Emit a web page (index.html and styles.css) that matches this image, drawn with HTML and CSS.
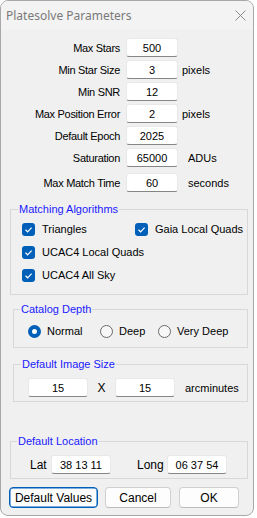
FILE: index.html
```html
<!DOCTYPE html>
<html>

<head>
  <title>Platesolve Parameters</title>
  <link rel="stylesheet" href="styles.css">
</head>

<body>
  <div class="window">
    <div class="titlebar">
      <span class="title">Platesolve Parameters</span>
      <svg class="close" width="11" height="11" viewBox="0 0 11 11">
        <path d="M0.5 0.5 L10.5 10.5 M10.5 0.5 L0.5 10.5" stroke="#8a8a8a" stroke-width="1" fill="none" />
      </svg>
    </div>

    <div class="content">
      <div class="params">
        <label>Max Stars</label>
        <input type="text" value="500">
        <span></span>

        <label>Min Star Size</label>
        <input type="text" value="3">
        <span class="unit">pixels</span>

        <label>Min SNR</label>
        <input type="text" value="12">
        <span></span>

        <label>Max Position Error</label>
        <input type="text" value="2">
        <span class="unit">pixels</span>

        <label>Default Epoch</label>
        <input type="text" value="2025">
        <span></span>

        <label>Saturation</label>
        <input type="text" value="65000">
        <span class="unit wide">ADUs</span>

        <label class="last">Max Match Time</label>
        <input class="last" type="text" value="60">
        <span class="unit wide last">seconds</span>
      </div>

      <fieldset class="group algos">
        <legend>Matching Algorithms</legend>
        <div class="checks">
          <div class="check-item"><span class="checkbox"><svg width="13" height="13" viewBox="0 0 13 13"><path d="M3.5 6.8 L5.6 8.8 L9.6 4.6" stroke="#fff" stroke-width="1.2" fill="none" /></svg></span>Triangles</div>
          <div class="check-item"><span class="checkbox"><svg width="13" height="13" viewBox="0 0 13 13"><path d="M3.5 6.8 L5.6 8.8 L9.6 4.6" stroke="#fff" stroke-width="1.2" fill="none" /></svg></span>Gaia Local Quads</div>
          <div class="check-item"><span class="checkbox"><svg width="13" height="13" viewBox="0 0 13 13"><path d="M3.5 6.8 L5.6 8.8 L9.6 4.6" stroke="#fff" stroke-width="1.2" fill="none" /></svg></span>UCAC4 Local Quads</div>
          <div></div>
          <div class="check-item"><span class="checkbox"><svg width="13" height="13" viewBox="0 0 13 13"><path d="M3.5 6.8 L5.6 8.8 L9.6 4.6" stroke="#fff" stroke-width="1.2" fill="none" /></svg></span>UCAC4 All Sky</div>
        </div>
      </fieldset>

      <fieldset class="group depth">
        <legend>Catalog Depth</legend>
        <div class="radios">
          <div class="radio-item normal"><span class="radio selected"></span>Normal</div>
          <div class="radio-item deep"><span class="radio"></span>Deep</div>
          <div class="radio-item"><span class="radio"></span>Very Deep</div>
        </div>
      </fieldset>

      <fieldset class="group imagesize">
        <legend>Default Image Size</legend>
        <div class="size-row">
          <input class="wide-input" type="text" value="15">
          <span class="times">X</span>
          <input class="wide-input" type="text" value="15">
          <span class="arcmin">arcminutes</span>
        </div>
      </fieldset>

      <fieldset class="group location">
        <legend>Default Location</legend>
        <div class="loc-row">
          <span class="lat">Lat</span>
          <input class="wide-input" type="text" value="38 13 11">
          <span class="long">Long</span>
          <input class="wide-input" type="text" value="06 37 54">
        </div>
      </fieldset>

      <div class="buttons">
        <button class="btn btn-default">Default Values</button>
        <button class="btn btn-cancel">Cancel</button>
        <button class="btn btn-ok">OK</button>
      </div>
    </div>
  </div>
</body>

</html>
```

FILE: styles.css
```css
body {
  margin: 0;
  background: #ffffff;
  font-family: "Liberation Sans", Arial, sans-serif;
  font-size: 11px;
  color: #000;
}

.window {
  width: 254px;
  height: 516px;
  box-sizing: border-box;
  border: 1px solid #a8a8a8;
  border-radius: 8px;
  background: #f0f0f0;
  overflow: hidden;
}

.titlebar {
  height: 29px;
  background: #f3f3f3;
  display: flex;
  align-items: center;
  justify-content: space-between;
  padding: 0 7px 0 5px;
}

.title {
  font-family: "Noto Sans", sans-serif;
  font-size: 12px;
  color: #7a7a7a;
  margin-top: -1px;
}

.close {
  margin-top: -1px;
}

.content {
  padding-top: 8px;
}

/* top parameters */
.params {
  display: grid;
  grid-template-columns: 119px 52px auto;
  column-gap: 6px;
  row-gap: 3px;
  align-items: center;
}

.params label {
  text-align: right;
  letter-spacing: -0.3px;
}

.params .last {
  margin-top: 3px;
}

.unit {
  margin-left: -2px;
}

.unit.wide {
  margin-left: 4px;
}

input[type="text"] {
  height: 19px;
  box-sizing: border-box;
  padding: 0;
  border: 1px solid #e8e8e8;
  border-bottom: 1px solid #868686;
  border-radius: 3px;
  background: #fff;
  font-family: "Liberation Sans", Arial, sans-serif;
  font-size: 11px;
  text-align: center;
  color: #000;
  width: 52px;
}

input.wide-input {
  width: 60px;
}

/* groups */
.group {
  margin: 0;
  padding: 0;
  border: 1px solid #d8d8d8;
  border-radius: 0;
  box-sizing: border-box;
}

.group legend {
  color: #1a1aff;
  line-height: 13px;
  padding: 0 1px;
  margin-left: 7px;
}

.algos {
  margin: 11px 0 0 9px;
  width: 238px;
  padding: 4px 0 10px 0;
}

.checks {
  display: grid;
  grid-template-columns: 113px auto;
  grid-auto-rows: 18px;
  row-gap: 5px;
  padding-left: 11px;
}

.check-item {
  display: flex;
  align-items: center;
  white-space: nowrap;
}

.checkbox {
  width: 13px;
  height: 13px;
  border-radius: 3px;
  background: #005fb8;
  margin-right: 7px;
  display: flex;
}

.depth {
  margin: 8px 0 0 12px;
  width: 235px;
  padding: 6px 0 7px 0;
}

.depth legend,
.location legend {
  margin-left: 6px;
}

.radios {
  display: flex;
  height: 18px;
  align-items: center;
  padding-left: 14px;
}

.radio-item {
  display: flex;
  align-items: center;
}

.radio-item.normal {
  width: 72px;
}

.radio-item.deep {
  width: 58px;
}

.radio {
  width: 13px;
  height: 13px;
  box-sizing: border-box;
  border-radius: 50%;
  border: 1px solid #6a6a6a;
  background: #f7f7f7;
  margin-right: 6px;
}

.radio.selected {
  border: 4px solid #005fb8;
  background: #fff;
}

.imagesize {
  margin: 10px 0 0 12px;
  width: 235px;
  padding: 7px 0 4px 0;
}

.size-row,
.loc-row {
  display: flex;
  align-items: center;
}

.size-row {
  padding-left: 14px;
}

.times {
  width: 27px;
  text-align: center;
  font-size: 12px;
}

.arcmin {
  margin-left: 10px;
}

.location {
  margin: 33px 0 0 9px;
  width: 238px;
  padding: 7px 0 4px 0;
}

.loc-row {
  padding-left: 19px;
}

.lat {
  width: 21px;
  font-size: 12px;
}

.long {
  margin-left: 26px;
  width: 30px;
  font-size: 12px;
}

/* bottom buttons */
.buttons {
  display: flex;
  margin: 8px 0 0 8px;
}

.btn {
  height: 21px;
  box-sizing: border-box;
  border: 1px solid #d0d0d0;
  border-bottom-color: #bcbcbc;
  border-radius: 4px;
  background: #fdfdfd;
  font-family: "Liberation Sans", Arial, sans-serif;
  font-size: 12px;
  color: #000;
  padding: 0;
}

.btn-default {
  width: 89px;
  border: 1px solid #005fb8;
  box-shadow: inset 0 0 0 0.5px #005fb8;
}

.btn-cancel {
  width: 66px;
  margin-left: 7px;
}

.btn-ok {
  width: 60px;
  margin-left: 8px;
}
```
